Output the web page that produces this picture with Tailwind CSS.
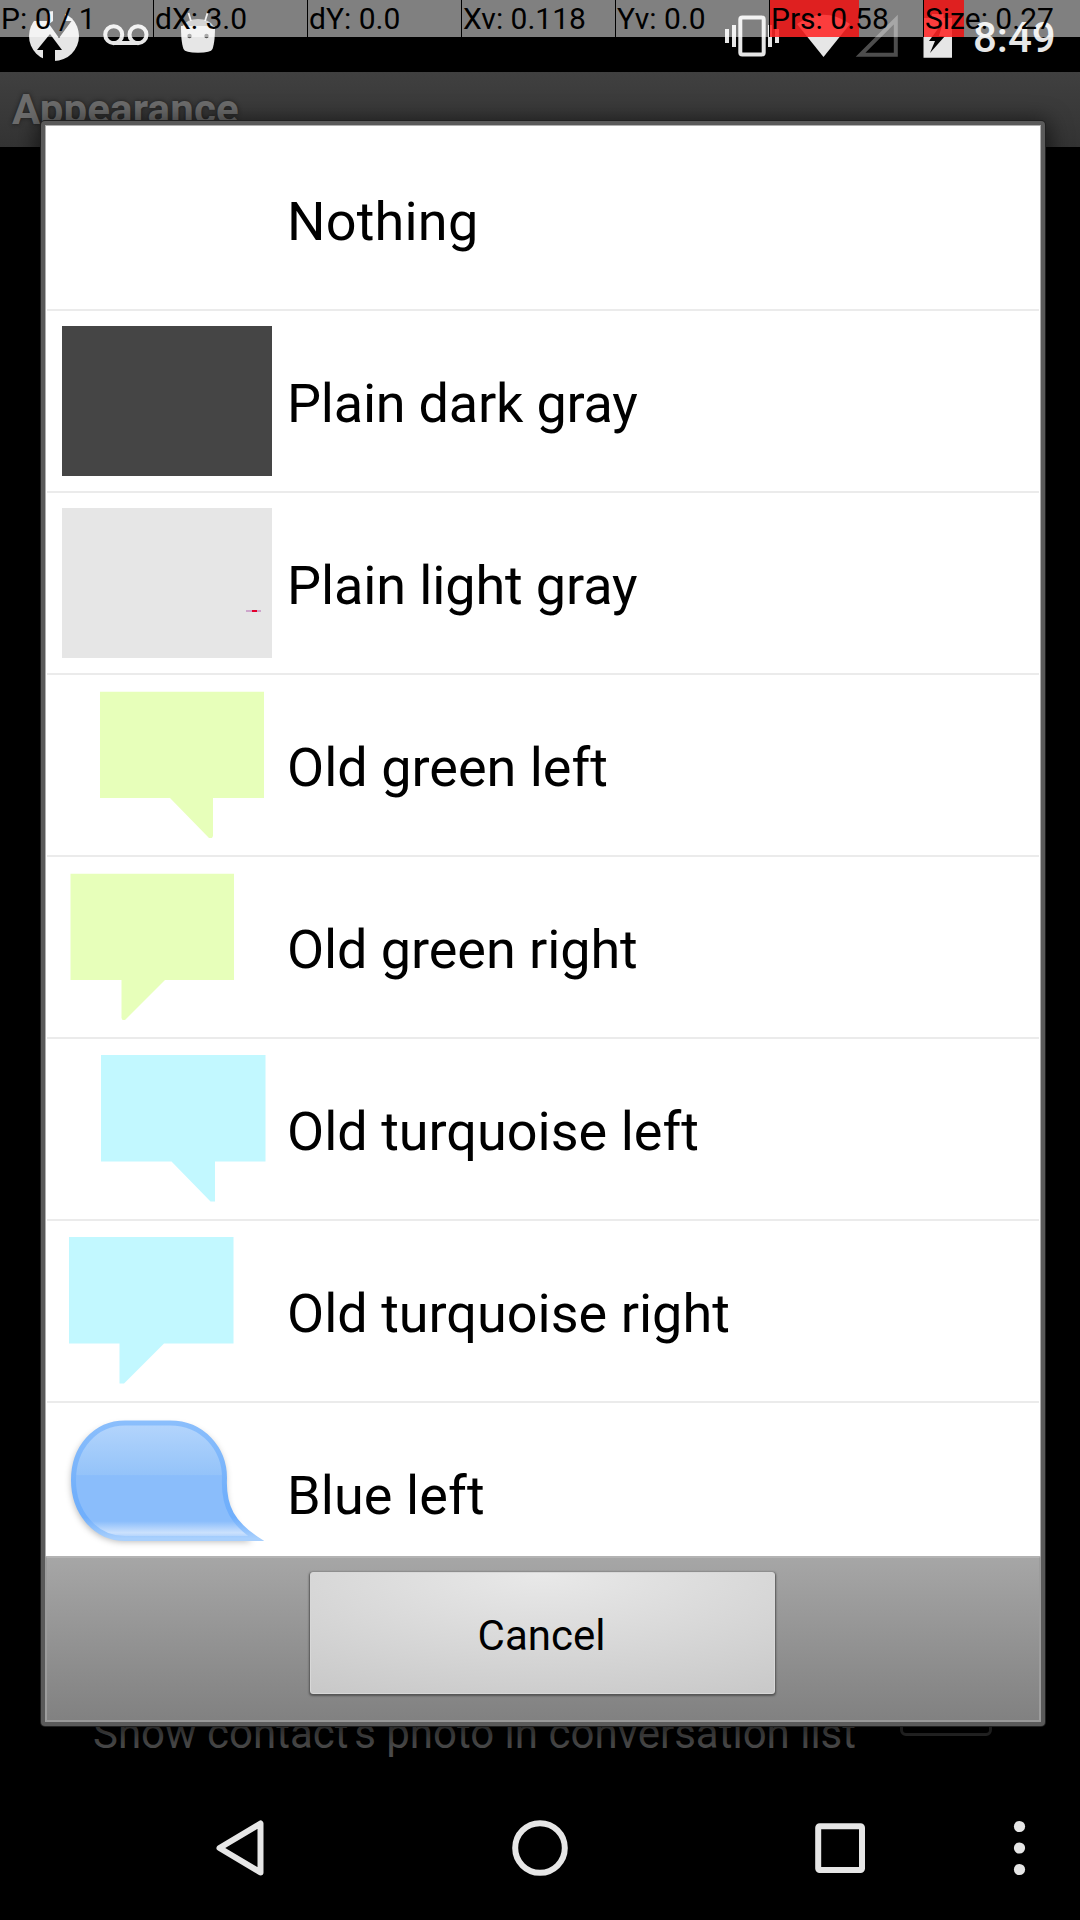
<!DOCTYPE html>
<html lang="en">
<head>
<meta charset="utf-8">
<title>Appearance</title>
<script src="https://cdn.jsdelivr.net/npm/@tailwindcss/browser@4"></script>
</head>
<body class="bg-black">
<div class="relative flex h-[1920px] w-[1080px] flex-col overflow-hidden bg-black font-['Roboto',sans-serif]">

  <!-- status bar -->
  <div class="flex h-[72px] shrink-0 items-start text-[#e6e6e6]">
    <svg class="ml-7 h-[72px] w-[52px]" viewBox="28 0 52 72">
      <circle cx="54" cy="36" r="25" fill="currentColor"/>
      <path d="M50 34L62 50H55V62H43V50H37Z" fill="#000"/>
      <path d="M53 10H65V21H71.5L59 38L49 24L53 21ZM47 10V21H34L36 12Z" fill="#000"/>
    </svg>
    <svg class="ml-[22px] h-[72px] w-12" viewBox="102 0 48 72" fill="none" stroke="currentColor" stroke-width="4">
      <circle cx="113.700" cy="34.700" r="8.500"/><circle cx="138" cy="34.700" r="8.500"/><path d="M113 43H139"/>
    </svg>
    <svg class="ml-[30px] h-[72px] w-9" viewBox="180 0 36 72">
      <path d="M181 26H215C215 36 214.500 43 212.500 49Q211 52.800 198 52.800Q185 52.800 183.500 49C181.500 43 181 36 181 26Z" fill="currentColor"/>
      <path d="M182.500 26Q187 19 198 19Q209 19 213.500 26Z" fill="#a8a8a8"/>
      <path d="M188.500 13L191 21M207.500 13L205 21" stroke="currentColor" stroke-width="1.800"/>
      <circle cx="189.500" cy="36" r="2.200" fill="#555"/><circle cx="206.500" cy="36" r="2.200" fill="#555"/>
    </svg>
    <svg class="ml-[508px] h-[72px] w-14" viewBox="724 0 56 72">
      <rect x="740.300" y="17.500" width="23.400" height="37" rx="2" fill="none" stroke="currentColor" stroke-width="4"/>
      <path d="M725 29h4v14h-4zM732 25h4v22h-4zM768 25h4v22h-4zM775 29h4v14h-4z" fill="currentColor"/>
    </svg>
    <svg class="ml-4 h-[72px] w-[56px]" viewBox="796 0 56 72"><path d="M823.500 57L797 24Q823.500 5.500 850 24Z" fill="currentColor"/></svg>
    <svg class="ml-0.5 h-[72px] w-[46px]" viewBox="854 0 46 72"><path d="M860.500 54.800H895.800V19.500Z" fill="none" stroke="#4d4d4d" stroke-width="4"/></svg>
    <svg class="ml-[22px] h-[72px] w-8" viewBox="922 0 32 72"><path d="M923.500 18H932V14H943.500V18H952V57.800H923.500Z" fill="currentColor"/><path d="M943 22L929 41H935L930 53L945 36H939Z" fill="#000"/></svg>
    <div class="ml-[19px] mt-[13px] text-[42px] leading-[49px] font-medium">8:49</div>
  </div>

  <!-- title bar -->
  <div class="h-[75px] shrink-0 bg-linear-to-b from-[#404040] to-[#333333] pl-3 pt-[13px] text-[42px] leading-[49px] font-bold tracking-[0.15px] text-[#6c6c6c] [text-shadow:0_0_4px_#1c1c1c]">Appearance</div>

  <!-- preference row behind the dialog -->
  <div class="mt-[1562px] flex h-[60px] shrink-0 items-start pl-[93px]">
    <div class="w-[807px] whitespace-nowrap text-[42px] leading-[49px] text-[#4c4c4c]">Show contact's photo in conversation list</div>
    <div class="mt-[-63px] h-[90px] w-[92px] rounded-md border-[3px] border-[#2e2e2e]"></div>
  </div>

  <!-- pointer location overlay -->
  <div class="absolute inset-x-0 top-0 grid h-[37px] grid-cols-[repeat(6,154px)_1fr] bg-white/50 text-[30px] leading-[37px] whitespace-nowrap text-black">
    <div class="pl-px">P: 0 / 1</div>
    <div class="-ml-px border-l border-black pl-px">dX: 3.0</div>
    <div class="-ml-px border-l border-black pl-px">dY: 0.0</div>
    <div class="-ml-px border-l border-black pl-px">Xv: 0.118</div>
    <div class="-ml-px border-l border-black pl-px">Yv: 0.0</div>
    <div class="-ml-px border-l border-black bg-linear-to-r from-[#ff0000]/75 from-[89px] to-transparent to-[89px] pl-px">Prs: 0.58</div>
    <div class="-ml-px border-l border-black bg-linear-to-r from-[#ff0000]/75 from-[40px] to-transparent to-[40px] pl-px">Size: 0.27</div>
  </div>

  <!-- dialog -->
  <div class="absolute left-[41px] top-[121px] flex h-[1605px] w-[1004px] flex-col rounded-[4px] border-4 border-[#5a5a5a] bg-white shadow-[0_0_0_1px_#202020,0_4px_22px_4px_rgba(0,0,0,0.6)]">
    <div class="flex h-[1431px] flex-col overflow-hidden border-x border-t border-[#b0b0b0] px-px pt-[3px] text-[54px] leading-[64px] text-black">
      <div class="flex h-[182px] shrink-0 items-center gap-[15px] border-b-2 border-[#ebebeb] pl-[15px]"><div class="h-[150px] w-[210px]"></div><div class="pt-[5px] tracking-[0.2px]">Nothing</div></div>
      <div class="flex h-[182px] shrink-0 items-center gap-[15px] border-b-2 border-[#ebebeb] pl-[15px]"><div class="h-[150px] w-[210px] bg-[#454545]"></div><div class="pt-[5px] tracking-[-0.22px]">Plain dark gray</div></div>
      <div class="flex h-[182px] shrink-0 items-center gap-[15px] border-b-2 border-[#ebebeb] pl-[15px]">
        <svg class="h-[150px] w-[210px] bg-[#e6e6e6]" viewBox="0 0 210 150"><path d="M184 102h15v2h-15z" fill="#cda6cb"/><path d="M190 102h5v2h-5z" fill="#e4002b"/></svg>
        <div class="pt-[5px] tracking-[-0.12px]">Plain light gray</div></div>
      <div class="flex h-[182px] shrink-0 items-center gap-[15px] border-b-2 border-[#ebebeb] pl-[15px]">
        <svg class="h-[150px] w-[210px]" viewBox="0 0 210 150"><path d="M38 1.700H202V108H151V146L150 148H147L108 108H38Z" fill="#e7ffba"/></svg>
        <div class="pt-[5px]">Old green left</div></div>
      <div class="flex h-[182px] shrink-0 items-center gap-[15px] border-b-2 border-[#ebebeb] pl-[15px]">
        <svg class="h-[150px] w-[210px]" viewBox="0 0 210 150"><path d="M8.500 1.700H172V108H103L63 148H60.500L59.500 146V108H8.500Z" fill="#e7ffba"/></svg>
        <div class="pt-[5px] tracking-[-0.08px]">Old green right</div></div>
      <div class="flex h-[182px] shrink-0 items-center gap-[15px] border-b-2 border-[#ebebeb] pl-[15px]">
        <svg class="h-[150px] w-[210px]" viewBox="0 0 210 150"><path d="M39 1H203.500V107.600H153V147.500H148.500L109.500 107.600H39Z" fill="#c2f8ff"/></svg>
        <div class="pt-[5px]">Old turquoise left</div></div>
      <div class="flex h-[182px] shrink-0 items-center gap-[15px] border-b-2 border-[#ebebeb] pl-[15px]">
        <svg class="h-[150px] w-[210px]" viewBox="0 0 210 150"><path d="M7 1H171.500V107.600H102L62 147.500H57.500V107.600H7Z" fill="#c2f8ff"/></svg>
        <div class="pt-[5px]">Old turquoise right</div></div>
      <div class="flex h-[180px] shrink-0 items-center gap-[15px] pl-[15px]">
        <svg class="h-[150px] w-[210px]" viewBox="0 0 210 150">
          <defs>
            <linearGradient id="fill" x1="0" y1="0" x2="0" y2="1"><stop offset="0" stop-color="#b4d5fc"/><stop offset=".45" stop-color="#94c3f9"/><stop offset=".455" stop-color="#8abdfb"/><stop offset=".85" stop-color="#8abdfb"/><stop offset=".95" stop-color="#cbe1fd"/><stop offset="1" stop-color="#a6cdfd"/></linearGradient>
            <linearGradient id="edge" x1="0" y1="0" x2="0" y2="1"><stop offset="0" stop-color="#8abefc"/><stop offset=".6" stop-color="#72b0fb"/><stop offset=".82" stop-color="#70affc"/><stop offset="1" stop-color="#a9d0fd"/></linearGradient>
            <filter id="soft" x="-10%" y="-10%" width="120%" height="125%"><feGaussianBlur stdDeviation="3"/></filter>
          </defs>
          <path d="M63 7H108C145 7 164 32 164 62C163 94 174 108 190 124H63C30 124 9 98 9 64S30 7 63 7Z" fill="#000" fill-opacity=".26" filter="url(#soft)"/>
          <path d="M63 5H108C141 5 162.500 31 162.500 60C161 90 172 106 194 120.500H63C33 120.500 11.500 94 11.500 62S33 5 63 5Z" fill="url(#fill)" stroke="url(#edge)" stroke-width="5" stroke-linejoin="miter" stroke-miterlimit="5"/>
        </svg>
        <div class="pt-[5px] tracking-[0.1px]">Blue left</div></div>
    </div>
    <div class="flex h-[166px] items-start justify-center border-x-2 border-b-2 border-t-2 border-x-[#9c9c9c] border-b-[#999999] border-t-[#b3b3b3] bg-linear-to-b from-[#a6a6a6] to-[#818181] pt-[14px] pr-px">
      <div class="flex h-[122px] w-[465px] items-center justify-center rounded-[3px] border border-[#d8d8d8] bg-[radial-gradient(ellipse_90%_115%_at_50%_0%,#e9e9e9,#c9c9c9)] pt-1 pr-[2px] text-[42px] leading-[49px] text-black shadow-[0_1px_2px_1px_#555555]">Cancel</div>
    </div>
  </div>

  <!-- navigation bar -->
  <div class="absolute inset-x-0 bottom-0 flex h-[144px] items-center text-[#e6e6e6]">
    <svg class="ml-[210px] h-[60px] w-[60px]" viewBox="210 1818 60 60"><path d="M260.500 1823.500V1872.500L219.500 1848Z" fill="none" stroke="currentColor" stroke-width="6" stroke-linejoin="round"/></svg>
    <svg class="ml-[240px] h-[60px] w-[60px]" viewBox="510 1818 60 60"><circle cx="540" cy="1848" r="24.800" fill="none" stroke="currentColor" stroke-width="6"/></svg>
    <svg class="ml-[240px] h-[60px] w-[60px]" viewBox="810 1818 60 60"><rect x="818.200" y="1826.200" width="43.800" height="43.800" rx="1.500" fill="none" stroke="currentColor" stroke-width="6"/></svg>
    <svg class="ml-[140px] h-[60px] w-5" viewBox="1010 1818 20 60" fill="currentColor"><circle cx="1019.500" cy="1826.500" r="5.600"/><circle cx="1019.500" cy="1848" r="5.600"/><circle cx="1019.500" cy="1869.500" r="5.600"/></svg>
  </div>
</div>
</body>
</html>
